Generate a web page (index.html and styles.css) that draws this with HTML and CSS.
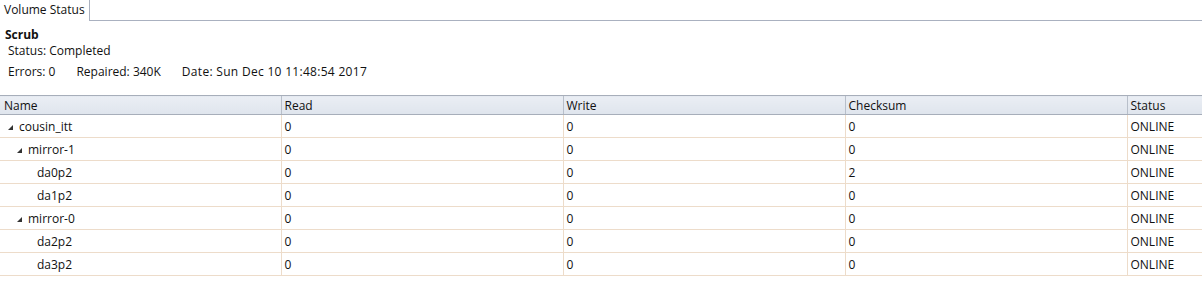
FILE: index.html
```html
<!DOCTYPE html>
<html lang="en">
<head>
    <title>Volume Status</title>
    <link rel="stylesheet" href="styles.css">
</head>
<body>
    <div class="tabBar">
        <div class="tab">Volume Status</div>
        <div class="tabRest"></div>
    </div>

    <div class="scrub">
        <div class="scrubTitlu">Scrub</div>
        <div class="scrubLinie">Status: Completed</div>
        <div class="scrubLinie detalii">
            <span>Errors: 0</span>
            <span>Repaired: 340K</span>
            <span class="data">Date: Sun Dec 10 11:48:54 2017</span>
        </div>
    </div>

    <table class="tabel">
        <colgroup>
            <col class="colNume">
            <col class="colNr">
            <col class="colNr">
            <col class="colNr">
            <col>
        </colgroup>
        <thead>
            <tr>
                <th>Name</th>
                <th>Read</th>
                <th>Write</th>
                <th>Checksum</th>
                <th>Status</th>
            </tr>
        </thead>
        <tbody>
            <tr>
                <td class="nivel0"><span class="sageata"></span>cousin_itt</td>
                <td>0</td><td>0</td><td>0</td><td>ONLINE</td>
            </tr>
            <tr>
                <td class="nivel1"><span class="sageata"></span>mirror-1</td>
                <td>0</td><td>0</td><td>0</td><td>ONLINE</td>
            </tr>
            <tr>
                <td class="nivel2">da0p2</td>
                <td>0</td><td>0</td><td>2</td><td>ONLINE</td>
            </tr>
            <tr>
                <td class="nivel2">da1p2</td>
                <td>0</td><td>0</td><td>0</td><td>ONLINE</td>
            </tr>
            <tr>
                <td class="nivel1"><span class="sageata"></span>mirror-0</td>
                <td>0</td><td>0</td><td>0</td><td>ONLINE</td>
            </tr>
            <tr>
                <td class="nivel2">da2p2</td>
                <td>0</td><td>0</td><td>0</td><td>ONLINE</td>
            </tr>
            <tr>
                <td class="nivel2">da3p2</td>
                <td>0</td><td>0</td><td>0</td><td>ONLINE</td>
            </tr>
        </tbody>
    </table>
</body>
</html>
```

FILE: styles.css
```css
body {
    margin: 0;
    font-family: "Open Sans", "Liberation Sans", sans-serif;
    font-size: 12px;
    color: #111;
    background-color: white;
}

.tabBar {
    display: flex;
    height: 21px;
}

.tab {
    padding: 1px 5px 0 4px;
    width: 80px;
    border-right: 1px solid #aab1c0;
    white-space: nowrap;
}

.tabRest {
    flex: 1;
    border-bottom: 1px solid #aab1c0;
}

.scrub {
    padding: 5px 0 0 5px;
    height: 69px;
}

.scrubTitlu {
    font-weight: bold;
    height: 16px;
}

.scrubLinie {
    padding-left: 3px;
    height: 21px;
}

.detalii {
    display: flex;
    gap: 21px;
}

.data {
    letter-spacing: 0.3px;
}

.tabel {
    width: 100%;
    border-collapse: collapse;
    table-layout: fixed;
}

.colNume {
    width: 281px;
}

.colNr {
    width: 282px;
}

.tabel th {
    text-align: left;
    font-weight: normal;
    height: 18px;
    padding: 0 3px;
    background: linear-gradient(#eaeef4, #dfe5ed);
    border-top: 1px solid #a7aeba;
    border-bottom: 1px solid #a7aeba;
    border-left: 1px solid #b8bfca;
}

.tabel th:first-child {
    border-left: none;
    padding-left: 4px;
}

.tabel td {
    height: 22px;
    padding: 0 3px;
    border-bottom: 1px solid #eddcca;
    border-left: 1px solid #eddcca;
    white-space: nowrap;
}

.tabel td:first-child {
    border-left: none;
}

.nivel0 {
    padding-left: 8px !important;
}

.nivel1 {
    padding-left: 17px !important;
}

.nivel2 {
    padding-left: 37px !important;
}

.sageata {
    display: inline-block;
    width: 0;
    height: 0;
    border-left: 5px solid transparent;
    border-bottom: 5px solid #333;
    margin-right: 6px;
    vertical-align: 1px;
}
```
